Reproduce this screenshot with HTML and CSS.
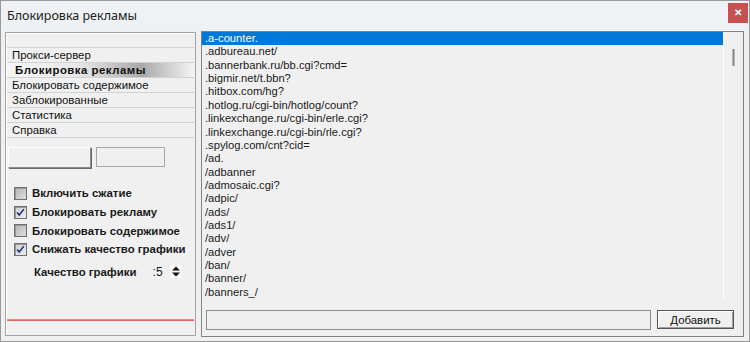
FILE: index.html
```html
<!DOCTYPE html>
<html lang="ru">
<head>
    <meta charset="UTF-8">
    <title>Блокировка рекламы</title>
    <link rel="stylesheet" href="styles.css">
</head>
<body>
    <div class="window">
        <div class="titlebar">
            <span class="title">Блокировка рекламы</span>
            <button class="close">&#x2715;</button>
        </div>
        <div class="content">
            <div class="side">
                <ul class="tabs">
                    <li>Прокси-сервер</li>
                    <li class="active">Блокировка рекламы</li>
                    <li>Блокировать содержимое</li>
                    <li>Заблокированные</li>
                    <li>Статистика</li>
                    <li>Справка</li>
                </ul>

                <div class="boxes">
                    <div class="box raised"></div>
                    <div class="box sunken"></div>
                </div>

                <div class="options">
                    <div class="opt"><span class="check"></span>Включить сжатие</div>
                    <div class="opt"><span class="check on"><svg viewBox="0 0 13 13"><polyline points="2.5,6.5 5,9.5 10.5,2.5"/></svg></span>Блокировать рекламу</div>
                    <div class="opt"><span class="check"></span>Блокировать содержимое</div>
                    <div class="opt"><span class="check on"><svg viewBox="0 0 13 13"><polyline points="2.5,6.5 5,9.5 10.5,2.5"/></svg></span>Снижать качество графики</div>
                </div>

                <div class="quality">
                    <span class="q-label">Качество графики</span>
                    <span class="q-val">:5</span>
                    <span class="spin">
                        <svg viewBox="0 0 10 13"><polygon points="1,5.5 5,1.5 9,5.5"/><polygon points="1,7.5 5,11.5 9,7.5"/></svg>
                    </span>
                </div>

                <div class="red-line"></div>
            </div>

            <div class="main">
                <div class="listwrap">
                    <ul class="list">
                        <li class="selected">.a-counter.</li>
                        <li>.adbureau.net/</li>
                        <li>.bannerbank.ru/bb.cgi?cmd=</li>
                        <li>.bigmir.net/t.bbn?</li>
                        <li>.hitbox.com/hg?</li>
                        <li>.hotlog.ru/cgi-bin/hotlog/count?</li>
                        <li>.linkexchange.ru/cgi-bin/erle.cgi?</li>
                        <li>.linkexchange.ru/cgi-bin/rle.cgi?</li>
                        <li>.spylog.com/cnt?cid=</li>
                        <li>/ad.</li>
                        <li>/adbanner</li>
                        <li>/admosaic.cgi?</li>
                        <li>/adpic/</li>
                        <li>/ads/</li>
                        <li>/ads1/</li>
                        <li>/adv/</li>
                        <li>/adver</li>
                        <li>/ban/</li>
                        <li>/banner/</li>
                        <li>/banners_/</li>
                    </ul>
                    <div class="scroll"><div class="thumb"></div></div>
                </div>
                <div class="addrow">
                    <input class="field" type="text">
                    <button class="add">Добавить</button>
                </div>
            </div>
        </div>
    </div>
</body>
</html>
```

FILE: styles.css
```css
html, body {
    margin: 0;
    padding: 0;
}
body {
    font-family: 'Liberation Sans', Arial, sans-serif;
    background: #f0f0f0;
    color: #111;
}
.window {
    width: 750px;
    height: 342px;
    box-sizing: border-box;
    border: 1px solid #9a9a9a;
    background: #f0f0f0;
    display: flex;
    flex-direction: column;
}
.titlebar {
    height: 30px;
    display: flex;
    justify-content: space-between;
    align-items: flex-start;
    padding: 1px 1px 0 6px;
    box-sizing: border-box;
    background: #eff1f4;
}
.title {
    font-family: 'Noto Sans', sans-serif;
    font-size: 12.5px;
    line-height: 16px;
    margin-top: 6px;
    color: #222;
}
.close {
    width: 20px;
    height: 20px;
    margin-top: 1px;
    padding: 0;
    border: none;
    background: #c75050;
    color: #fff;
    font-size: 10px;
    font-weight: bold;
    line-height: 20px;
}
.content {
    flex: 1;
    display: flex;
    align-items: flex-start;
    padding-left: 4px;
    gap: 5px;
}

/* left panel */
.side {
    width: 191px;
    height: 304px;
    margin-top: 1px;
    box-sizing: border-box;
    border: 1px solid #a3a3a3;
    box-shadow: inset 1px 1px #fff;
    display: flex;
    flex-direction: column;
}
.tabs {
    list-style: none;
    margin: 0 1px;
    padding: 14px 0 0 0;
    font-size: 11.4px;
}
.tabs li {
    height: 14px;
    line-height: 14px;
    border-top: 1px solid #d2d2d2;
    padding-left: 5px;
    white-space: nowrap;
}
.tabs li:last-child {
    border-bottom: 1px solid #d2d2d2;
}
.tabs li.active {
    font-weight: bold;
    padding-left: 8px;
    letter-spacing: 0.5px;
    background: linear-gradient(to right, #f6f6f6 0%, #e6e6e6 40%, #a9a9a9 72%, #f4f4f4 100%);
}
.boxes {
    display: flex;
    gap: 5px;
    margin: 9px 0 0 2px;
}
.box {
    box-sizing: border-box;
    height: 21px;
}
.box.raised {
    width: 83px;
    border-top: 1px solid #fff;
    border-left: 1px solid #fff;
    border-right: 1px solid #8a8a8a;
    border-bottom: 1px solid #8a8a8a;
    box-shadow: 1px 1px #696969;
}
.box.sunken {
    width: 69px;
    height: 20px;
    border: 1px solid #a8a8a8;
}
.options {
    margin: 16px 0 0 8px;
}
.opt {
    height: 18.7px;
    display: flex;
    align-items: center;
    font-size: 11.4px;
    font-weight: bold;
    color: #1a1a1a;
    white-space: nowrap;
}
.check {
    width: 13px;
    height: 13px;
    box-sizing: border-box;
    border: 1px solid #6f6f6f;
    background: linear-gradient(135deg, #b4b4b4, #dedede);
    box-shadow: inset 1px 1px #9a9a9a;
    margin-right: 5px;
    flex: none;
}
.check.on {
    background: linear-gradient(135deg, #cfcfcf, #ececec);
}
.check svg {
    display: block;
    width: 11px;
    height: 11px;
}
.check polyline {
    fill: none;
    stroke: #1d2b7c;
    stroke-width: 1.8;
}
.quality {
    display: flex;
    align-items: center;
    height: 14px;
    margin: 6px 0 0 28px;
    font-size: 11.4px;
    font-weight: bold;
    color: #1a1a1a;
}
.q-val {
    font-weight: normal;
    margin-left: 16px;
    font-size: 12px;
}
.spin {
    margin-left: 8px;
    width: 10px;
    height: 13px;
    background: #fafafa;
}
.spin svg {
    display: block;
    width: 10px;
    height: 13px;
}
.spin polygon {
    fill: #111;
}
.red-line {
    margin: auto 1px 14px;
    height: 2px;
    background: linear-gradient(#ee9b9b, #d95555);
}

/* right panel */
.main {
    width: 543px;
    height: 306px;
    box-sizing: border-box;
    border: 1px solid #828282;
    display: flex;
    flex-direction: column;
}
.listwrap {
    height: 268px;
    display: flex;
}
.list {
    list-style: none;
    margin: 0;
    padding: 0;
    width: 521px;
    font-size: 11.2px;
    color: #1a1a1a;
}
.list li {
    height: 13.36px;
    line-height: 13px;
    padding-left: 3px;
    white-space: nowrap;
}
.list li.selected {
    height: 13px;
    margin-bottom: 0.36px;
    background: #0078d7;
    color: #fff;
}
.scroll {
    flex: 1;
    border-left: 1px solid #fff;
    padding: 17px 0 0 8px;
}
.thumb {
    width: 3px;
    height: 17px;
    box-sizing: border-box;
    background: #8a8a8a;
    border-left: 1px solid #b5b5b5;
    border-right: 1px solid #b5b5b5;
}
.addrow {
    display: flex;
    align-items: flex-start;
    gap: 6px;
    padding: 10px 0 0 4px;
}
.field {
    width: 445px;
    height: 20px;
    box-sizing: border-box;
    margin: 0;
    border: 1px solid #8c8c8c;
    background: #f0f0f0;
}
.add {
    width: 77px;
    height: 19px;
    box-sizing: border-box;
    padding: 0;
    border: 1px solid #555;
    box-shadow: inset 1px 1px #fff, inset -1px -1px #a0a0a0;
    background: #f0f0f0;
    font-family: 'Liberation Sans', Arial, sans-serif;
    font-size: 11.4px;
    color: #111;
}
```
